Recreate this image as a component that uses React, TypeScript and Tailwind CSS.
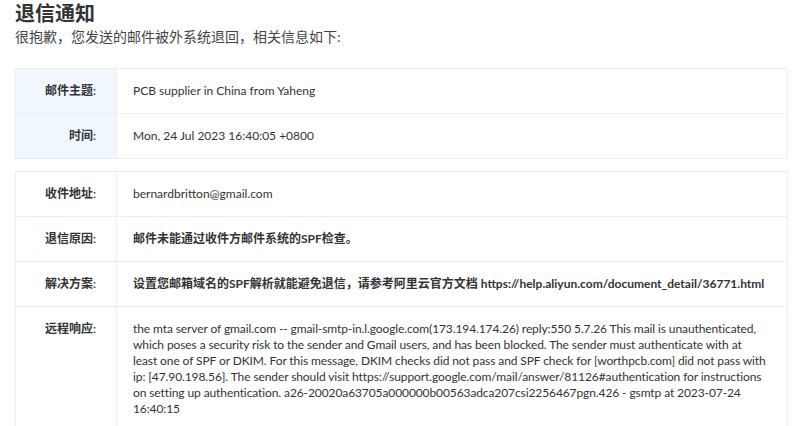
// App.tsx
const font = "font-['Lato','Noto_Sans_CJK_SC',sans-serif]";

type Row = { label: string; value: React.ReactNode; bold?: boolean; top?: boolean };

const remoteLines = [
  "the mta server of gmail.com -- gmail-smtp-in.l.google.com(173.194.174.26) reply:550 5.7.26 This mail is unauthenticated,",
  "which poses a security risk to the sender and Gmail users, and has been blocked. The sender must authenticate with at",
  "least one of SPF or DKIM. For this message, DKIM checks did not pass and SPF check for [worthpcb.com] did not pass with",
  "ip: [47.90.198.56]. The sender should visit https://support.google.com/mail/answer/81126#authentication for instructions",
  "on setting up authentication. a26-20020a63705a000000b00563adca207csi2256467pgn.426 - gsmtp at 2023-07-24",
  "16:40:15",
];

function InfoTable({ rows, shaded }: { rows: Row[]; shaded?: boolean }) {
  return (
    <div className="border border-[#eeeeee] w-[773px]">
      {rows.map((r, i) => (
        <div
          key={r.label}
          className={`flex ${i > 0 ? "border-t border-[#eeeeee]" : ""} ${r.top ? "items-start" : "items-stretch"}`}
        >
          <div
            className={`w-[101px] shrink-0 self-stretch border-r border-[#eeeeee] pr-5 py-[14px] text-right text-[12px] leading-4 font-semibold text-[#333] ${
              shaded ? "bg-[#f0f7ff]" : "bg-white"
            }`}
          >
            {r.label}
          </div>
          <div className={`flex-1 pl-4 pr-3 py-[14px] text-[12px] leading-4 text-[#333] ${r.bold ? "font-bold" : ""}`}>
            {r.value}
          </div>
        </div>
      ))}
    </div>
  );
}

export default function App() {
  return (
    <div className={`${font} bg-white min-h-screen pl-[15px] pt-[2px]`}>
      <h1 className="text-[20px] leading-[22px] font-bold text-[#333]">退信通知</h1>
      <p className="mt-[3px] text-[14px] leading-5 text-[#444]">很抱歉，您发送的邮件被外系统退回，相关信息如下:</p>

      <div className="mt-[21px] flex flex-col gap-3">
        <InfoTable
          shaded
          rows={[
            { label: "邮件主题:", value: "PCB supplier in China from Yaheng" },
            { label: "时间:", value: "Mon, 24 Jul 2023 16:40:05 +0800" },
          ]}
        />
        <InfoTable
          rows={[
            { label: "收件地址:", value: "bernardbritton@gmail.com" },
            { label: "退信原因:", value: "邮件未能通过收件方邮件系统的SPF检查。", bold: true },
            {
              label: "解决方案:",
              value: "设置您邮箱域名的SPF解析就能避免退信，请参考阿里云官方文档 https://help.aliyun.com/document_detail/36771.html",
              bold: true,
            },
            {
              label: "远程响应:",
              top: true,
              value: (
                <div className="tracking-[-0.1px]">
                  {remoteLines.map((l) => (
                    <div key={l}>{l}</div>
                  ))}
                </div>
              ),
            },
          ]}
        />
      </div>
    </div>
  );
}
